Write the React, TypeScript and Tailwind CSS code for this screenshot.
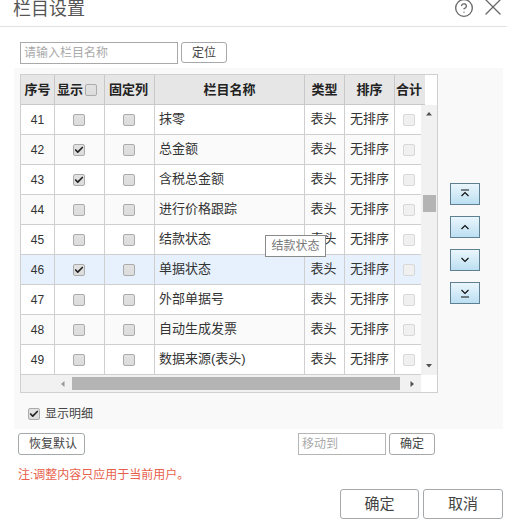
import { Check, X, CircleHelp } from 'lucide-react'

const rows = [
    { no: 41, name: '抹零', show: false },
    { no: 42, name: '总金额', show: true },
    { no: 43, name: '含税总金额', show: true },
    { no: 44, name: '进行价格跟踪', show: false },
    { no: 45, name: '结款状态', show: false },
    { no: 46, name: '单据状态', show: true, active: true },
    { no: 47, name: '外部单据号', show: false },
    { no: 48, name: '自动生成发票', show: false },
    { no: 49, name: '数据来源(表头)', show: false },
]

function Box({ checked = false, faint = false }: { checked?: boolean; faint?: boolean }) {
    return (
        <span
            className={
                faint
                    ? 'flex h-[12px] w-[12px] items-center justify-center rounded-[2px] border border-[#d8d8d8] bg-[#f0f0f0]'
                    : 'flex h-[12px] w-[12px] items-center justify-center rounded-[2px] border border-[#ababab] bg-gradient-to-b from-[#e2e2e2] to-[#dcdcdc]'
            }
        >
            {checked && <Check className="h-[10px] w-[10px] text-[#222]" strokeWidth={4} />}
        </span>
    )
}

function Arrow({ dir }: { dir: 'up' | 'down' | 'left' | 'right' }) {
    const pts = {
        up: '1,4.5 4,1 7,4.5',
        down: '1,3 7,3 4,6.5',
        left: '5.5,1 5.5,7 2,4',
        right: '2.5,1 6,4 2.5,7',
    }
    return (
        <svg width="8" height="8" viewBox="0 0 8 8" className="shrink-0">
            <polygon points={pts[dir]} fill={dir === 'left' ? '#9a9a9a' : '#505050'} />
        </svg>
    )
}

function MoveBtn({ d }: { d: string }) {
    return (
        <button className="flex h-[22px] w-[30px] items-center justify-center border border-[#5f8090] bg-gradient-to-b from-[#eaf6fc] to-[#bcdff2]">
            <svg width="12" height="10" viewBox="0 0 12 10" fill="none" stroke="#111" strokeWidth="1.2">
                <path d={d} />
            </svg>
        </button>
    )
}

function Btn({ className, children }: { className: string; children: React.ReactNode }) {
    return (
        <button className={'rounded-[3px] border border-[#a5a9ab] bg-white text-[#444] ' + className}>
            {children}
        </button>
    )
}

export default function App() {
    return (
        <div
            className="relative h-[521px] w-[507px] overflow-hidden bg-white text-[12px] text-[#333]"
            style={{ fontFamily: '"Liberation Sans", "Noto Sans CJK SC", sans-serif' }}
        >
            <div className="flex h-[27px] items-start border-b border-[#e2e2e2] pl-[13px]">
                <h1 className="text-[18px] font-normal leading-[18px] text-[#555]">栏目设置</h1>
                <CircleHelp className="ml-auto -mt-[2px] h-[20px] w-[20px] text-[#666]" strokeWidth={1.6} />
                <X className="ml-[5px] -mt-[7px] h-[28px] w-[28px] text-[#666]" strokeWidth={1.1} />
            </div>

            <div className="mt-[15px] flex items-start pl-[20px]">
                <input
                    className="h-[22px] w-[158px] border border-[#a9a9a9] px-[3px] text-[12px] placeholder:text-[#aaa]"
                    placeholder="请输入栏目名称"
                    readOnly
                />
                <Btn className="ml-[3px] h-[21px] w-[46px]">定位</Btn>
            </div>

            <div className="ml-[14px] mt-[4px] flex h-[361px] w-[489px] flex-col bg-[#f9f9f9] pl-[6px] pt-[6px]">
                <div className="flex items-start">
                    <div className="w-[418px] border border-[#d0d0d0] bg-white">
                        <div className="flex h-[30px] text-[13px] font-bold text-[#222]">
                            <div className="flex w-[34px] items-center justify-center border-b border-r border-[#c8c8c8] bg-[#e6e6e6]">序号</div>
                            <div className="flex w-[50px] items-center gap-[2px] border-b border-r border-[#c8c8c8] bg-[#e6e6e6] pl-[2px]">
                                显示<Box />
                            </div>
                            <div className="flex w-[50px] items-center justify-center border-b border-r border-[#c8c8c8] bg-[#e6e6e6] pr-[2px]">固定列</div>
                            <div className="flex w-[150px] items-center justify-center border-b border-r border-[#c8c8c8] bg-[#e6e6e6]">栏目名称</div>
                            <div className="flex w-[40px] items-center justify-center border-b border-r border-[#c8c8c8] bg-[#e6e6e6]">类型</div>
                            <div className="flex w-[50px] items-center justify-center border-b border-r border-[#c8c8c8] bg-[#e6e6e6]">排序</div>
                            <div className="flex w-[30px] items-center border-b border-[#c8c8c8] bg-[#e6e6e6] pl-[1px]">合计</div>
                        </div>
                        <div className="flex">
                            <div className="w-[400px]">
                                {rows.map((r) => (
                                    <div
                                        key={r.no}
                                        className={
                                            r.active
                                                ? 'flex h-[30px] bg-[#e6f1fd] text-[13px]'
                                                : r.no % 2 === 0
                                                  ? 'flex h-[30px] bg-[#fafafa] text-[13px]'
                                                  : 'flex h-[30px] bg-white text-[13px]'
                                        }
                                    >
                                        <div className="flex w-[34px] items-center justify-center border-b border-r border-[#cfcfcf] text-[12px]">{r.no}</div>
                                        <div className="flex w-[50px] items-center justify-center border-b border-r border-[#cfcfcf] pr-[1px]">
                                            <Box checked={r.show} />
                                        </div>
                                        <div className="flex w-[50px] items-center justify-center border-b border-r border-[#cfcfcf] pr-[1px]">
                                            <Box />
                                        </div>
                                        <div className="flex w-[150px] items-center border-b border-r border-[#cfcfcf] pb-[2px] pl-[4px]">{r.name}</div>
                                        <div className="flex w-[40px] items-center justify-center border-b border-r border-[#cfcfcf] pb-[2px] pr-[2px]">表头</div>
                                        <div className="flex w-[50px] items-center justify-center border-b border-r border-[#cfcfcf] pb-[2px]">无排序</div>
                                        <div className="flex w-[26px] items-center justify-center border-b border-[#cfcfcf] pl-[2px]">
                                            <Box faint />
                                        </div>
                                    </div>
                                ))}
                            </div>
                            <div className="flex w-[16px] flex-col items-center bg-[#f1f1f1] pt-[6px]">
                                <Arrow dir="up" />
                                <div className="mt-[76px] h-[17px] w-[13px] bg-[#b4b4b4]" />
                                <div className="mt-[149px]">
                                    <Arrow dir="down" />
                                </div>
                            </div>
                        </div>
                        <div className="flex h-[17px] items-center">
                            <div className="flex h-full w-[400px] items-center bg-[#f1f1f1]">
                                <div className="ml-[38px]">
                                    <Arrow dir="left" />
                                </div>
                                <div className="ml-[5px] h-[13px] w-[328px] bg-[#b4b4b4]" />
                                <div className="ml-[8px]">
                                    <Arrow dir="right" />
                                </div>
                            </div>
                        </div>
                    </div>

                    <div className="ml-[12px] mt-[109px] flex flex-col gap-[11px]">
                        <MoveBtn d="M2 1h8M2.5 7L6 3.5 9.5 7" />
                        <MoveBtn d="M2.5 7L6 3.5 9.5 7" />
                        <MoveBtn d="M2.5 3L6 6.5 9.5 3" />
                        <MoveBtn d="M2.5 2L6 5.5 9.5 2M2 9h8" />
                    </div>
                </div>

                <label className="ml-[8px] mt-[12px] flex items-center gap-[5px] text-[12px] text-[#444]">
                    <Box checked />
                    显示明细
                </label>
            </div>

            <div className="mt-[4px] flex items-start pl-[18px]">
                <Btn className="h-[22px] w-[67px] pl-[3px]">恢复默认</Btn>
                <input
                    className="ml-[213px] h-[22px] w-[88px] border border-[#b5b5b5] px-[3px] text-[12px] placeholder:text-[#aaa]"
                    placeholder="移动到"
                    readOnly
                />
                <Btn className="ml-[3px] h-[22px] w-[46px]">确定</Btn>
            </div>

            <p className="ml-[18px] mt-[11px] text-[12px] leading-[18px] text-[#e8604c]">注:调整内容只应用于当前用户。</p>

            <div className="mt-[5px] flex justify-end gap-[4px] pr-[4px]">
                <Btn className="h-[30px] w-[79px] text-[15px]">确定</Btn>
                <Btn className="h-[30px] w-[80px] text-[15px]">取消</Btn>
            </div>

            <div className="absolute left-[265px] top-[235px] flex h-[22px] w-[61px] items-center justify-center border border-[#8a8a8a] bg-white pb-[1px] text-[12px] text-[#777]">
                结款状态
            </div>
        </div>
    )
}
